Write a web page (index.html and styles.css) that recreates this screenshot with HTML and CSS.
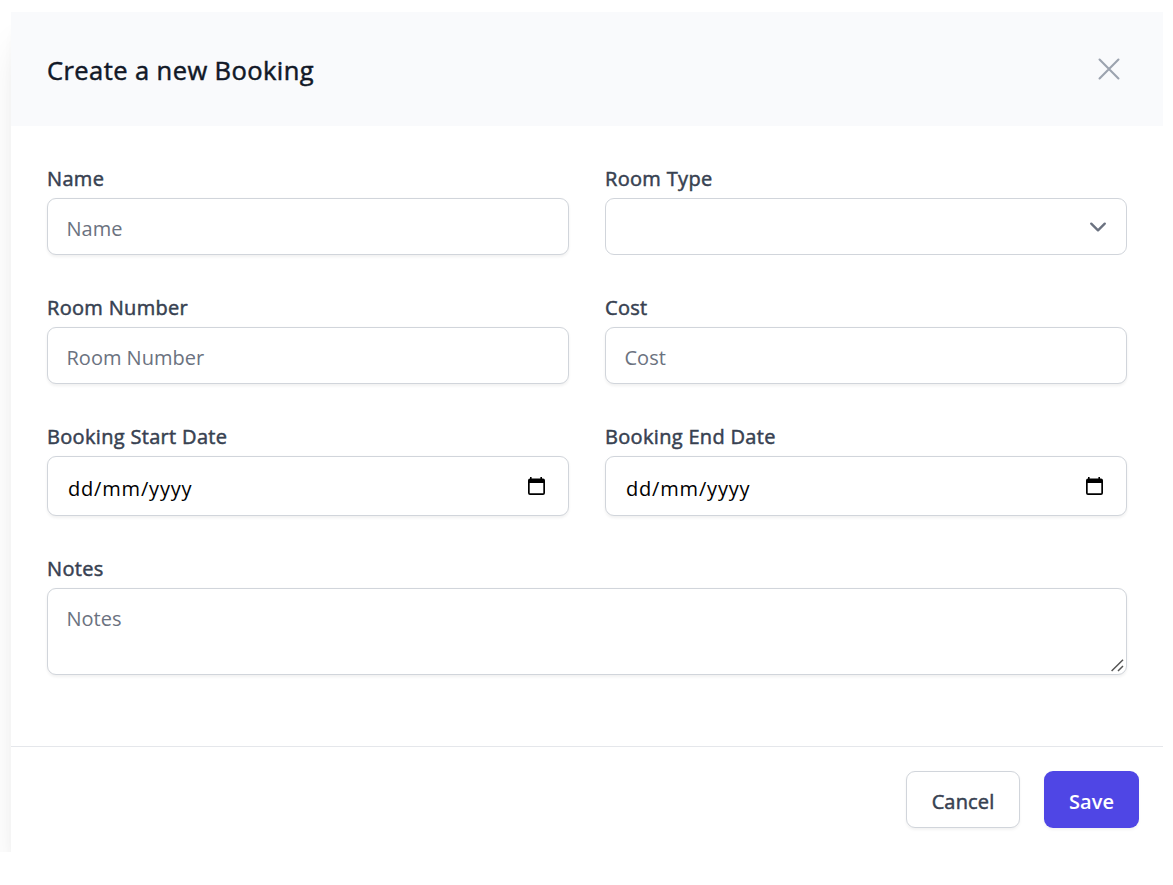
FILE: index.html
```html
<!DOCTYPE html>
<html lang="en">
<head>
<meta charset="utf-8">
<title>Create a new Booking</title>
<link rel="stylesheet" href="styles.css">
</head>
<body>
<div class="stage">
  <form class="panel">
    <header class="panel-header">
      <h2 class="title">Create a new Booking</h2>
      <button class="close" type="button" aria-label="Close">
        <svg width="36" height="36" viewBox="0 0 24 24" fill="none" stroke="currentColor" stroke-width="1.4" stroke-linecap="round"><path d="M5.7 5.7l12.600 12.600M18.300 5.700l-12.600 12.600"/></svg>
      </button>
    </header>
    <div class="fields">
      <div class="field">
        <label class="label">Name</label>
        <div class="control"><span class="hint">Name</span></div>
      </div>
      <div class="field">
        <label class="label">Room Type</label>
        <div class="control select">
          <svg width="30" height="30" viewBox="0 0 20 20" fill="none" stroke="#6b7280" stroke-width="1.6" stroke-linecap="round" stroke-linejoin="round"><path d="M5.500 7.800L10 12.200l4.500-4.400"/></svg>
        </div>
      </div>
      <div class="field">
        <label class="label">Room Number</label>
        <div class="control"><span class="hint">Room Number</span></div>
      </div>
      <div class="field">
        <label class="label">Cost</label>
        <div class="control"><span class="hint">Cost</span></div>
      </div>
      <div class="field">
        <label class="label">Booking Start Date</label>
        <div class="control date">
          <span class="date-text">dd/mm/yyyy</span>
          <svg width="18" height="20" viewBox="0 0 18 20"><path d="M3 1h1.600v1.500H13.400V1H15v1.500h1q2 0 2 2V17q0 2-2 2H3q-2 0-2-2V4.500q0-2 2-2zM2.700 7v10.300h13.600V7z" fill-rule="evenodd"/></svg>
        </div>
      </div>
      <div class="field">
        <label class="label">Booking End Date</label>
        <div class="control date">
          <span class="date-text">dd/mm/yyyy</span>
          <svg width="18" height="20" viewBox="0 0 18 20"><path d="M3 1h1.600v1.500H13.400V1H15v1.500h1q2 0 2 2V17q0 2-2 2H3q-2 0-2-2V4.500q0-2 2-2zM2.700 7v10.300h13.600V7z" fill-rule="evenodd"/></svg>
        </div>
      </div>
      <div class="field wide">
        <label class="label">Notes</label>
        <div class="control notes">
          <span class="hint">Notes</span>
          <svg class="grip" width="13" height="13" viewBox="0 0 13 13" stroke="#555" stroke-width="1.5"><path d="M.6 12L12 .8M7 12L12 7"/></svg>
        </div>
      </div>
    </div>
    <footer class="actions">
      <button class="btn cancel" type="button">Cancel</button>
      <button class="btn save" type="button">Save</button>
    </footer>
  </form>
</div>
</body>
</html>
```
FILE: styles.css
```css
* { box-sizing: border-box; }
body {
  margin: 0;
  background: #fff;
  font-family: "Open Sans", "Noto Sans", sans-serif;
}
.stage {
  width: 1163px;
  height: 852px;
  padding: 12px 0 0 11px;
  overflow: hidden;
}
.panel {
  display: flex;
  flex-direction: column;
  height: 840px;
  background: #fff;
  box-shadow: 0 30px 38px -8px rgba(0, 0, 0, .1), 0 12px 15px -9px rgba(0, 0, 0, .1);
}
.panel-header {
  display: flex;
  justify-content: space-between;
  align-items: flex-start;
  height: 114px;
  padding: 39px 36px 0;
  background: #f9fafc;
}
.title {
  margin: 0;
  font-size: 25.5px;
  line-height: 39px;
  font-weight: 400;
  color: #111827;
  letter-spacing: .42px;
  -webkit-text-stroke: .5px currentColor;
}
.close {
  display: flex;
  padding: 0;
  border: 0;
  background: none;
  color: #9ca3af;
}
.fields {
  display: grid;
  grid-template-columns: 1fr 1fr;
  column-gap: 36px;
  row-gap: 36px;
  padding: 36px;
}
.wide { grid-column: 1 / -1; }
.label {
  display: block;
  height: 36px;
  font-size: 20px;
  line-height: 34px;
  font-weight: 400;
  color: #374151;
  letter-spacing: .32px;
  -webkit-text-stroke: .5px currentColor;
}
.control {
  display: flex;
  align-items: center;
  height: 57px;
  padding: 4px 19px 0 18.5px;
  border: 1px solid #d1d5db;
  border-radius: 9px;
  background: #fff;
  box-shadow: 0 1.5px 3px rgba(0, 0, 0, .06);
  font-size: 20px;
  line-height: 30px;
}
.hint { color: #6b7280; }
.select {
  justify-content: flex-end;
  padding: 0 13px 0 0;
  box-shadow: none;
}
.date {
  justify-content: space-between;
  height: 60px;
  padding: 0 23px 0 20px;
}
.date-text {
  padding-top: 5px;
  color: #000;
  letter-spacing: .82px;
}
.notes {
  position: relative;
  align-items: flex-start;
  height: 87px;
  padding-top: 15px;
}
.grip { position: absolute; right: 2px; bottom: 2px; }
.actions {
  display: flex;
  justify-content: flex-end;
  gap: 24px;
  margin-top: auto;
  height: 106px;
  padding: 24px;
  border-top: 1px solid #e5e7eb;
}
.btn {
  height: 57px;
  padding: 3px 0 0;
  border-radius: 9px;
  font-family: inherit;
  font-size: 20px;
  box-shadow: 0 1.5px 3px rgba(0, 0, 0, .05);
}
.cancel {
  width: 114px;
  border: 1px solid #d1d5db;
  background: #fff;
  color: #374151;
  letter-spacing: .15px;
  -webkit-text-stroke: .5px currentColor;
}
.save {
  width: 95px;
  border: 0;
  background: #4f46e5;
  color: #fff;
  font-weight: 600;
}
```
